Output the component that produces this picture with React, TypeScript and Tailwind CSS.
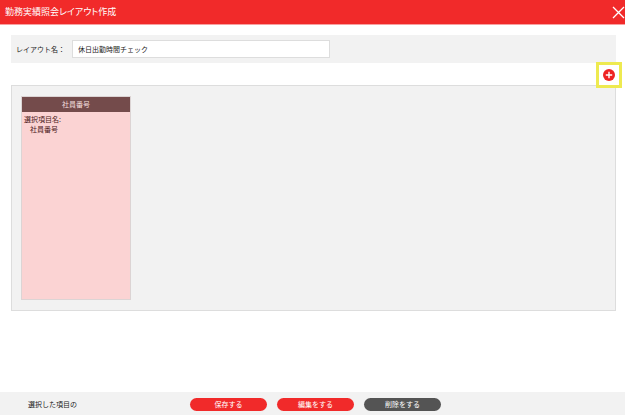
import { useState } from "react";

const columns = [{ id: 1, title: "社員番号", items: ["社員番号"] }];

function Header() {
  return (
    <header className="flex h-[25px] items-center justify-between border-b border-[#f8a0a0] bg-[#f12a2a] pl-[5px] text-white">
      <h1 className="pb-px text-[9px] leading-[12px] [font-feature-settings:'palt']">
        勤務実績照会レイアウト作成
      </h1>
      <button type="button" aria-label="閉じる">
        <svg className="size-[13px]" viewBox="0 0 13 13" fill="none" stroke="currentColor" strokeWidth="1.3">
          <path d="M1 1 12 12M12 1 1 12" />
        </svg>
      </button>
    </header>
  );
}

function AddButton() {
  return (
    <div className="relative">
      <button
        type="button"
        aria-label="追加"
        className="flex size-3 items-center justify-center rounded-full bg-[#ee2222] text-white"
      >
        <svg className="size-2" viewBox="0 0 8 8" fill="none" stroke="currentColor" strokeWidth="1.4">
          <path d="M4 0.8V7.2M0.8 4H7.2" />
        </svg>
      </button>
      {/* Highlight frame */}
      <div className="pointer-events-none absolute -inset-[7px] border-3 border-[#eeea50]" />
    </div>
  );
}

export default function App() {
  const [name, setName] = useState("休日出勤時間チェック");

  return (
    <div className="flex min-h-screen flex-col bg-white font-['Noto_Sans_CJK_JP',sans-serif] text-[7px] leading-[10px] text-[#222222]">
      <Header />

      <main className="flex-1 pt-[10px] pr-[9px] pl-[11px]">
        <div className="flex items-center bg-[#f2f2f2] py-[5px] pl-[5px]">
          <label htmlFor="layout-name" className="w-14 pb-px">
            レイアウト名：
          </label>
          <input
            id="layout-name"
            type="text"
            value={name}
            onChange={(e) => setName(e.target.value)}
            className="h-[18px] w-[258px] border border-[#dddddd] bg-white px-[5px] pb-px"
          />
        </div>

        <div className="flex justify-end pt-[6px] pr-px pb-1">
          <AddButton />
        </div>

        <section className="flex h-[226px] border border-[#dddddd] bg-[#f2f2f2] px-[9px] py-[10px]">
          {columns.map((column) => (
            <div key={column.id} className="w-[110px] border border-[#dcd4d4] bg-[#fbd3d3] text-[#4b2020]">
              <h2 className="bg-[#744b4b] py-[2px] text-center leading-[11px] text-[#f5dede]">
                {column.title}
              </h2>
              <div className="px-[2px] pt-[2px]">
                <p>選択項目名:</p>
                <ul className="pl-[6px]">
                  {column.items.map((item) => (
                    <li key={item}>{item}</li>
                  ))}
                </ul>
              </div>
            </div>
          ))}
        </section>
      </main>

      <footer className="flex h-[23px] items-center bg-[#f2f2f2] pt-[2px] pl-7">
        <span className="w-[162px] pb-px">選択した項目の</span>
        <div className="flex gap-[10px] text-white">
          <button type="button" className="h-[13px] w-[77px] rounded-full bg-[#f12a2a] pb-px">
            保存する
          </button>
          <button type="button" className="h-[13px] w-[77px] rounded-full bg-[#f12a2a] pb-px">
            編集をする
          </button>
          <button type="button" className="h-[13px] w-[77px] rounded-full bg-[#545454] pb-px">
            削除をする
          </button>
        </div>
      </footer>
    </div>
  );
}
